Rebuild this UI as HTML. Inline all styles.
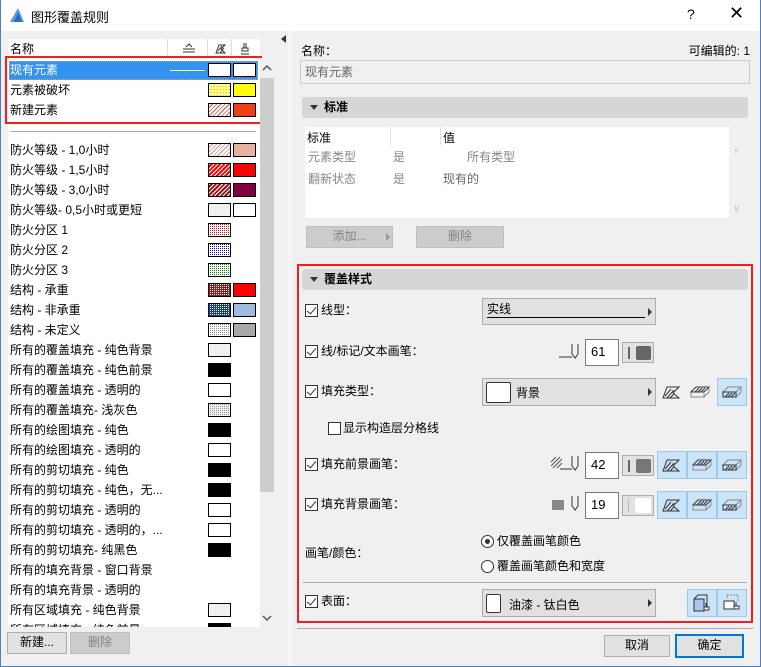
<!DOCTYPE html>
<html><head><meta charset="utf-8"><style>
*{box-sizing:border-box;margin:0;padding:0}
body{width:761px;height:667px;background:#f0f0f0;font-family:"Liberation Sans","Noto Sans CJK SC",sans-serif;font-size:12px;color:#000;position:relative;overflow:hidden}
.a{position:absolute}
.win{position:absolute;left:0;top:0;width:761px;height:667px;border:1px solid #4a7fc0;border-top:none}
.row{position:absolute;left:10px;height:20px;line-height:20px;white-space:nowrap}
.sw{position:absolute;width:23px;height:14px;border:1px solid #000}
.hdr{position:absolute;background:#d6d6d6;border-radius:3px;font-weight:bold;line-height:21px;height:21px;padding-left:22px}
.hdr:before{content:"";position:absolute;left:8px;top:8px;border-left:4px solid transparent;border-right:4px solid transparent;border-top:5px solid #333}
.cb{position:absolute;width:13px;height:13px;border:1px solid #333;background:#fff}
.cb.on:after{content:"";position:absolute;left:3px;top:0px;width:4px;height:8px;border-right:1.5px solid #333;border-bottom:1.5px solid #333;transform:rotate(40deg)}
.lbl{position:absolute;line-height:16px;white-space:nowrap}
.dd{position:absolute;background:#e1e1e1;border:1px solid #adadad}
.dd:after{content:"";position:absolute;right:3px;top:50%;margin-top:-4px;border-top:4px solid transparent;border-bottom:4px solid transparent;border-left:4px solid #333}
.inp{position:absolute;background:#fff;border:1px solid #7a7a7a;padding-left:5px;line-height:24px;font-size:13px}
.tg{position:absolute;background:#e1e1e1;border:1px solid #adadad}
.bb{position:absolute;background:#cce4f7;border:1px solid #99c9ef}
.btn{position:absolute;background:#e1e1e1;border:1px solid #adadad;text-align:center;line-height:19px}
.dis{background:#cccccc;border-color:#bfbfbf;color:#838383}
</style></head><body>
<div class="a" style="left:0;top:0;width:761px;height:31px;background:#fff"></div>
<svg class="a" style="left:9px;top:7px" width="16" height="16"><polygon points="1,15 9,1 15,15" fill="#5a9be0"/><polygon points="5,15 9,5 13,15" fill="#2a6cc4"/></svg>
<div class="a" style="left:31px;top:7px;font-size:13px">图形覆盖规则</div>
<div class="a" style="left:687px;top:6px;font-size:14px">?</div>
<div class="a" style="left:729px;top:3px;font-size:18px;font-weight:300">✕</div>

<div class="a" style="left:288px;top:31px;width:4px;height:636px;background:#f7f7f7"></div>
<div class="a" style="left:281px;top:35px;border-top:4px solid transparent;border-bottom:4px solid transparent;border-right:5px solid #333"></div>

<!-- left list -->
<div class="a" style="left:8px;top:39px;width:252px;height:588px;background:#fff"></div>
<div class="a" style="left:10px;top:40px">名称</div>
<div class="a" style="left:167px;top:39px;width:1px;height:18px;background:#ddd"></div>
<div class="a" style="left:207px;top:39px;width:1px;height:18px;background:#ddd"></div>
<div class="a" style="left:231px;top:39px;width:1px;height:18px;background:#ddd"></div>
<svg class="a" style="left:182px;top:43px" width="14" height="10"><path d="M4 4 L7 1 L10 4 M1 6 H13 M1 9 H13" stroke="#333" fill="none"/></svg>
<svg class="a" style="left:215px;top:43px" width="12" height="11"><path d="M1 10 L4 2 H10 L6 6 L10 10 Z M3 8 L7 3 M5 10 L9 5" stroke="#333" fill="none"/></svg>
<svg class="a" style="left:240px;top:42px" width="10" height="13"><path d="M4 1 V6 M6 1 V6 M2 6 H8 V9 H2 Z M1 12 H9" stroke="#333" fill="none"/></svg>

<div class="a" style="left:9px;top:61px;width:249px;height:19px;background:#3393ee;border:1px dotted #aaa"></div>
<div class="row" style="top:60px;color:#fff">现有元素</div>
<div class="a" style="left:170px;top:70px;width:35px;height:1px;background:#fff"></div>
<div class="sw" style="left:208px;top:63px;background:#fff"></div><div class="sw" style="left:233px;top:63px;background:#fff"></div>
<div class="row" style="top:80px">元素被破坏</div>
<div class="sw" style="left:208px;top:83px;background:linear-gradient(90deg,#ffff80 50%,transparent 50%) 0 0/3px 3px,linear-gradient(#ffff80 66%,#c8c860 66%) 0 0/3px 3px"></div><div class="sw" style="left:233px;top:83px;background:#ffff00"></div>
<div class="row" style="top:100px">新建元素</div>
<div class="sw" style="left:208px;top:103px;background:repeating-linear-gradient(135deg,#fff 0 2px,#e05050 2px 3px)"></div><div class="sw" style="left:233px;top:103px;background:#ee4015"></div>
<div class="a" style="left:5px;top:56px;width:257px;height:68px;border:2px solid #f02020"></div>
<div class="a" style="left:11px;top:131px;width:245px;height:1px;background:#aaa"></div>

<div class="row" style="top:140px">防火等级 - 1,0小时</div><div class="sw" style="left:208px;top:143px;background:repeating-linear-gradient(135deg,#fff 0 2px,#d09090 2px 3px)"></div><div class="sw" style="left:233px;top:143px;background:#e8b0a0"></div>
<div class="row" style="top:160px">防火等级 - 1,5小时</div><div class="sw" style="left:208px;top:163px;background:repeating-linear-gradient(135deg,#fff 0 1px,#f00 1px 3px)"></div><div class="sw" style="left:233px;top:163px;background:#f00"></div>
<div class="row" style="top:180px">防火等级 - 3,0小时</div><div class="sw" style="left:208px;top:183px;background:repeating-linear-gradient(135deg,#fff 0 1px,#a01010 1px 3px)"></div><div class="sw" style="left:233px;top:183px;background:#800040"></div>
<div class="row" style="top:200px">防火等级- 0,5小时或更短</div><div class="sw" style="left:208px;top:203px;background:#f0f0f0"></div><div class="sw" style="left:233px;top:203px;background:#fff"></div>
<div class="row" style="top:220px">防火分区 1</div><div class="sw" style="left:208px;top:223px;background:linear-gradient(90deg,#fff 50%,transparent 50%) 0 0/2px 2px,linear-gradient(#e00 50%,#fff 50%) 0 0/2px 2px"></div>
<div class="row" style="top:240px">防火分区 2</div><div class="sw" style="left:208px;top:243px;background:linear-gradient(90deg,#fff 50%,transparent 50%) 0 0/2px 2px,linear-gradient(#00e 50%,#fff 50%) 0 0/2px 2px"></div>
<div class="row" style="top:260px">防火分区 3</div><div class="sw" style="left:208px;top:263px;background:linear-gradient(90deg,#fff 50%,transparent 50%) 0 0/2px 2px,linear-gradient(#080 50%,#fff 50%) 0 0/2px 2px"></div>
<div class="row" style="top:280px">结构 - 承重</div><div class="sw" style="left:208px;top:283px;background:linear-gradient(90deg,#b01010 50%,transparent 50%) 0 0/2px 2px,linear-gradient(#fff 50%,#b01010 50%) 0 0/2px 2px"></div><div class="sw" style="left:233px;top:283px;background:#f00"></div>
<div class="row" style="top:300px">结构 - 非承重</div><div class="sw" style="left:208px;top:303px;background:linear-gradient(90deg,#1030f0 50%,transparent 50%) 0 0/2px 2px,linear-gradient(#fff 50%,#1030f0 50%) 0 0/2px 2px"></div><div class="sw" style="left:233px;top:303px;background:#a0bcdc"></div>
<div class="row" style="top:320px">结构 - 未定义</div><div class="sw" style="left:208px;top:323px;background:linear-gradient(90deg,#fff 50%,transparent 50%) 0 0/2px 2px,linear-gradient(#888 50%,#fff 50%) 0 0/2px 2px"></div><div class="sw" style="left:233px;top:323px;background:#a8a8a8"></div>
<div class="row" style="top:340px">所有的覆盖填充 - 纯色背景</div><div class="sw" style="left:208px;top:343px;background:#f0f0f0"></div>
<div class="row" style="top:360px">所有的覆盖填充 - 纯色前景</div><div class="sw" style="left:208px;top:363px;background:#000"></div>
<div class="row" style="top:380px">所有的覆盖填充 - 透明的</div><div class="sw" style="left:208px;top:383px;background:#fff"></div>
<div class="row" style="top:400px">所有的覆盖填充- 浅灰色</div><div class="sw" style="left:208px;top:403px;background:linear-gradient(90deg,#eee 50%,transparent 50%) 0 0/2px 2px,linear-gradient(#999 50%,#eee 50%) 0 0/2px 2px"></div>
<div class="row" style="top:420px">所有的绘图填充 - 纯色</div><div class="sw" style="left:208px;top:423px;background:#000"></div>
<div class="row" style="top:440px">所有的绘图填充 - 透明的</div><div class="sw" style="left:208px;top:443px;background:#fff"></div>
<div class="row" style="top:460px">所有的剪切填充 - 纯色</div><div class="sw" style="left:208px;top:463px;background:#000"></div>
<div class="row" style="top:480px">所有的剪切填充 - 纯色，无...</div><div class="sw" style="left:208px;top:483px;background:#000"></div>
<div class="row" style="top:500px">所有的剪切填充 - 透明的</div><div class="sw" style="left:208px;top:503px;background:#fff"></div>
<div class="row" style="top:520px">所有的剪切填充 - 透明的，...</div><div class="sw" style="left:208px;top:523px;background:#fff"></div>
<div class="row" style="top:540px">所有的剪切填充- 纯黑色</div><div class="sw" style="left:208px;top:543px;background:#000"></div>
<div class="row" style="top:560px">所有的填充背景 - 窗口背景</div>
<div class="row" style="top:580px">所有的填充背景 - 透明的</div>
<div class="row" style="top:600px">所有区域填充 - 纯色背景</div><div class="sw" style="left:208px;top:603px;background:#f0f0f0"></div>
<div class="a" style="left:8px;top:620px;width:252px;height:7px;overflow:hidden"><div class="row" style="left:2px;top:0px">所有区域填充 - 纯色前景</div><div class="sw" style="left:200px;top:3px;background:#000"></div></div>
<!-- scrollbar -->
<div class="a" style="left:260px;top:58px;width:15px;height:569px;background:#f0f0f0"></div>
<div class="a" style="left:260px;top:78px;width:14px;height:414px;background:#cdcdcd"></div>
<svg class="a" style="left:262px;top:64px" width="10" height="8"><path d="M1 6 L5 2 L9 6" stroke="#555" fill="none" stroke-width="1.5"/></svg>
<svg class="a" style="left:262px;top:614px" width="10" height="8"><path d="M1 2 L5 6 L9 2" stroke="#555" fill="none" stroke-width="1.5"/></svg>
<div class="btn" style="left:7px;top:632px;width:60px;height:22px">新建...</div>
<div class="btn dis" style="left:70px;top:632px;width:60px;height:22px">删除</div>

<!-- right -->
<div class="a" style="left:301px;top:42px">名称：</div>
<div class="a" style="right:11px;top:42px">可编辑的: 1</div>
<div class="a" style="left:300px;top:60px;width:450px;height:24px;background:#f0f0f0;border:1px solid #ccc;color:#666;padding-left:4px;line-height:22px">现有元素</div>
<div class="hdr" style="left:302px;top:97px;width:446px">标准</div>
<div class="a" style="left:305px;top:127px;width:424px;height:91px;background:#fff"></div>
<div class="a" style="left:390px;top:127px;width:1px;height:18px;background:#ddd"></div>
<div class="a" style="left:440px;top:127px;width:1px;height:18px;background:#ddd"></div>
<div class="a" style="left:307px;top:129px">标准</div>
<div class="a" style="left:443px;top:129px">值</div>
<div class="a" style="left:308px;top:148px;color:#888">元素类型</div><div class="a" style="left:393px;top:148px;color:#888">是</div><div class="a" style="left:467px;top:148px;color:#888">所有类型</div>
<div class="a" style="left:308px;top:170px;color:#888">翻新状态</div><div class="a" style="left:393px;top:170px;color:#888">是</div><div class="a" style="left:443px;top:170px;color:#666">现有的</div>
<div class="a" style="left:734px;top:148px;color:#bbb;font-size:10px">^</div>
<div class="a" style="left:734px;top:203px;color:#bbb;font-size:10px">v</div>
<div class="btn dis" style="left:306px;top:226px;width:87px;height:22px">添加...</div>
<div class="a" style="left:386px;top:233px;border-top:4px solid transparent;border-bottom:4px solid transparent;border-left:4px solid #999"></div>
<div class="btn dis" style="left:416px;top:226px;width:88px;height:22px">删除</div>

<div class="a" style="left:297px;top:264px;width:456px;height:359px;border:2px solid #f02020"></div>
<div class="hdr" style="left:302px;top:269px;width:446px">覆盖样式</div>

<div class="cb on" style="left:305px;top:304px"></div><div class="lbl" style="left:321px;top:302px">线型：</div>
<div class="dd" style="left:482px;top:298px;width:174px;height:27px"><span class="a" style="left:4px;top:1px">实线</span><span class="a" style="left:4px;top:18px;width:158px;height:1px;background:#000"></span></div>

<div class="cb on" style="left:305px;top:345px"></div><div class="lbl" style="left:321px;top:343px">线/标记/文本画笔：</div>
<svg class="a" style="left:558px;top:341px" width="24" height="20"><path d="M1 16 H14 M14 3 V13 L17 17 L20 13 V3" stroke="#333" fill="none"/></svg>
<div class="inp" style="left:585px;top:339px;width:34px;height:27px">61</div>
<div class="tg" style="left:622px;top:342px;width:32px;height:21px"><span class="a" style="left:5px;top:4px;width:2px;height:12px;background:#666"></span><span class="a" style="left:13px;top:3px;width:15px;height:14px;background:#666;border-radius:2px"></span></div>

<div class="cb on" style="left:305px;top:385px"></div><div class="lbl" style="left:321px;top:383px">填充类型：</div>
<div class="dd" style="left:482px;top:378px;width:174px;height:28px"><span class="a" style="left:3px;top:3px;width:25px;height:21px;background:#fff;border:1px solid #333;border-radius:2px"></span><span class="a" style="left:33px;top:5px">背景</span></div>
<svg width="0" height="0" style="position:absolute"><defs>
<symbol id="i1" viewBox="0 0 20 14"><path d="M1 13 L5 2 H17 L11 8 L17 13 Z" fill="none" stroke="#333"/><path d="M3 11 L9 4 M5 13 L12 5 M8 13 L12 9" stroke="#333"/></symbol>
<symbol id="i2" viewBox="0 0 20 14"><path d="M1 7 L6 2 H19 L14 7 Z" fill="none" stroke="#333"/><path d="M5 7 L9 3 M8 7 L12 3 M11 7 L15 3" stroke="#333"/><path d="M1 7 V12 H14 V7 M14 12 L19 7 V2" fill="none" stroke="#888"/></symbol>
<symbol id="i3" viewBox="0 0 20 14"><path d="M1 7 L6 2 H19 L14 7 Z M14 12 L19 7 V2" fill="none" stroke="#888"/><path d="M1 7 V12 H14 V7 Z" fill="none" stroke="#333"/><path d="M3 12 L7 8 M6 12 L10 8 M9 12 L13 8" stroke="#333"/></symbol>
</defs></svg>
<svg class="a" style="left:662px;top:385px" width="20" height="14"><use href="#i1"/></svg>
<svg class="a" style="left:690px;top:385px" width="20" height="14"><use href="#i2"/></svg>
<div class="bb" style="left:717px;top:378px;width:30px;height:28px"></div>
<svg class="a" style="left:722px;top:385px" width="20" height="14"><use href="#i3"/></svg>

<div class="cb" style="left:328px;top:422px"></div><div class="lbl" style="left:343px;top:420px">显示构造层分格线</div>

<div class="cb on" style="left:305px;top:458px"></div><div class="lbl" style="left:321px;top:456px">填充前景画笔：</div>
<svg class="a" style="left:550px;top:453px" width="32" height="20"><path d="M1 9 L6 4 M1 13 L10 4 M3 15 L12 6 M7 15 L12 10" stroke="#555"/><path d="M10 16 H22 M22 3 V13 L25 17 L28 13 V3" stroke="#333" fill="none"/></svg>
<div class="inp" style="left:585px;top:452px;width:34px;height:27px">42</div>
<div class="tg" style="left:622px;top:455px;width:32px;height:21px"><span class="a" style="left:5px;top:4px;width:2px;height:12px;background:#666"></span><span class="a" style="left:13px;top:3px;width:15px;height:14px;background:#777;border-radius:2px"></span></div>
<div class="bb" style="left:657px;top:451px;width:30px;height:28px"></div><div class="bb" style="left:687px;top:451px;width:30px;height:28px"></div><div class="bb" style="left:717px;top:451px;width:30px;height:28px"></div>
<svg class="a" style="left:662px;top:458px" width="20" height="14"><use href="#i1"/></svg>
<svg class="a" style="left:692px;top:458px" width="20" height="14"><use href="#i2"/></svg>
<svg class="a" style="left:722px;top:458px" width="20" height="14"><use href="#i3"/></svg>

<div class="cb on" style="left:305px;top:498px"></div><div class="lbl" style="left:321px;top:496px">填充背景画笔：</div>
<svg class="a" style="left:550px;top:493px" width="32" height="20"><rect x="2" y="7" width="12" height="10" fill="#888"/><path d="M22 3 V13 L25 17 L28 13 V3" stroke="#333" fill="none"/></svg>
<div class="inp" style="left:585px;top:492px;width:34px;height:27px">19</div>
<div class="tg" style="left:622px;top:495px;width:32px;height:21px"><span class="a" style="left:5px;top:3px;width:1px;height:13px;background:#bbb"></span><span class="a" style="left:12px;top:2px;width:16px;height:15px;background:#fff;border-radius:2px"></span></div>
<div class="bb" style="left:657px;top:491px;width:30px;height:28px"></div><div class="bb" style="left:687px;top:491px;width:30px;height:28px"></div><div class="bb" style="left:717px;top:491px;width:30px;height:28px"></div>
<svg class="a" style="left:662px;top:498px" width="20" height="14"><use href="#i1"/></svg>
<svg class="a" style="left:692px;top:498px" width="20" height="14"><use href="#i2"/></svg>
<svg class="a" style="left:722px;top:498px" width="20" height="14"><use href="#i3"/></svg>

<div class="lbl" style="left:305px;top:545px">画笔/颜色：</div>
<div class="a" style="left:481px;top:535px;width:13px;height:13px;border:1px solid #333;border-radius:50%;background:#fff"><span class="a" style="left:3px;top:3px;width:5px;height:5px;border-radius:50%;background:#333"></span></div>
<div class="lbl" style="left:497px;top:533px">仅覆盖画笔颜色</div>
<div class="a" style="left:481px;top:560px;width:13px;height:13px;border:1px solid #333;border-radius:50%;background:#fff"></div>
<div class="lbl" style="left:497px;top:558px">覆盖画笔颜色和宽度</div>
<div class="a" style="left:303px;top:582px;width:444px;height:1px;background:#aaa"></div>

<div class="cb on" style="left:305px;top:595px"></div><div class="lbl" style="left:321px;top:593px">表面：</div>
<div class="dd" style="left:482px;top:589px;width:174px;height:28px"><span class="a" style="left:3px;top:4px;width:15px;height:19px;background:#fff;border:1px solid #333;border-radius:2px"></span><span class="a" style="left:26px;top:6px">油漆 - 钛白色</span></div>
<div class="bb" style="left:687px;top:589px;width:30px;height:28px"></div><div class="bb" style="left:717px;top:589px;width:30px;height:28px"></div>
<svg class="a" style="left:692px;top:593px" width="20" height="20"><path d="M2 6 L6 2 H15 V14 H11" fill="none" stroke="#333"/><rect x="2" y="6" width="10" height="12" fill="#a8c8f0" stroke="#333"/><path d="M14 10 V14 M12 14 H17 V17 H12 Z" stroke="#333" fill="#fff"/></svg>
<svg class="a" style="left:722px;top:593px" width="20" height="20"><path d="M5 2 H16 V8 M5 2 V6" fill="none" stroke="#888" stroke-dasharray="2 1"/><rect x="2" y="8" width="10" height="8" fill="#fff" stroke="#333"/><path d="M14 9 V13 M12 13 H17 V16 H12 Z" stroke="#333" fill="#fff"/></svg>

<div class="a" style="left:297px;top:628px;width:456px;height:1px;background:#aaa"></div>
<div class="btn" style="left:604px;top:635px;width:66px;height:22px">取消</div>
<div class="btn" style="left:675px;top:634px;width:69px;height:24px;border:2px solid #0078d7;line-height:19px">确定</div>
<div class="win"></div>
</body></html>
